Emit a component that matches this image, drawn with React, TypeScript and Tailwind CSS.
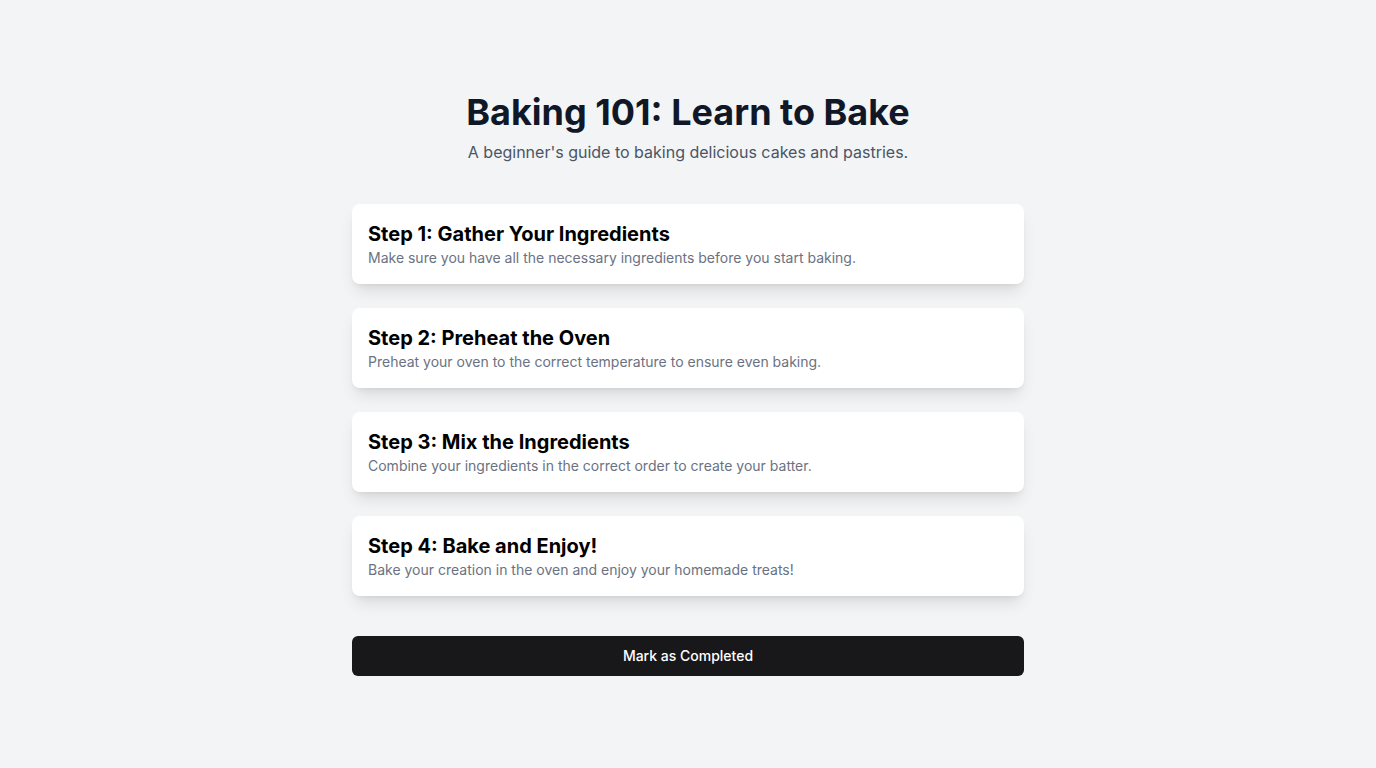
const steps = [
  {
    title: 'Step 1: Gather Your Ingredients',
    text: 'Make sure you have all the necessary ingredients before you start baking.',
  },
  {
    title: 'Step 2: Preheat the Oven',
    text: 'Preheat your oven to the correct temperature to ensure even baking.',
  },
  {
    title: 'Step 3: Mix the Ingredients',
    text: 'Combine your ingredients in the correct order to create your batter.',
  },
  {
    title: 'Step 4: Bake and Enjoy!',
    text: 'Bake your creation in the oven and enjoy your homemade treats!',
  },
];

export default function App() {
  return (
    <div className="min-h-screen bg-gray-100 flex items-center justify-center font-['Inter',sans-serif]">
      <div className="w-full max-w-2xl">
        {/* Header */}
        <h1 className="text-4xl font-bold text-gray-900 text-center">Baking 101: Learn to Bake</h1>
        <p className="mt-2 text-base text-gray-600 text-center">
          A beginner's guide to baking delicious cakes and pastries.
        </p>

        {/* Steps */}
        <div className="mt-10 space-y-6">
          {steps.map((step) => (
            <div key={step.title} className="bg-white rounded-lg shadow-lg p-4">
              <h2 className="text-xl font-bold text-black">{step.title}</h2>
              <p className="text-sm text-gray-500">{step.text}</p>
            </div>
          ))}
        </div>

        <button className="mt-10 w-full h-10 rounded-md bg-zinc-900 text-white text-sm font-medium">
          Mark as Completed
        </button>
      </div>
    </div>
  );
}
